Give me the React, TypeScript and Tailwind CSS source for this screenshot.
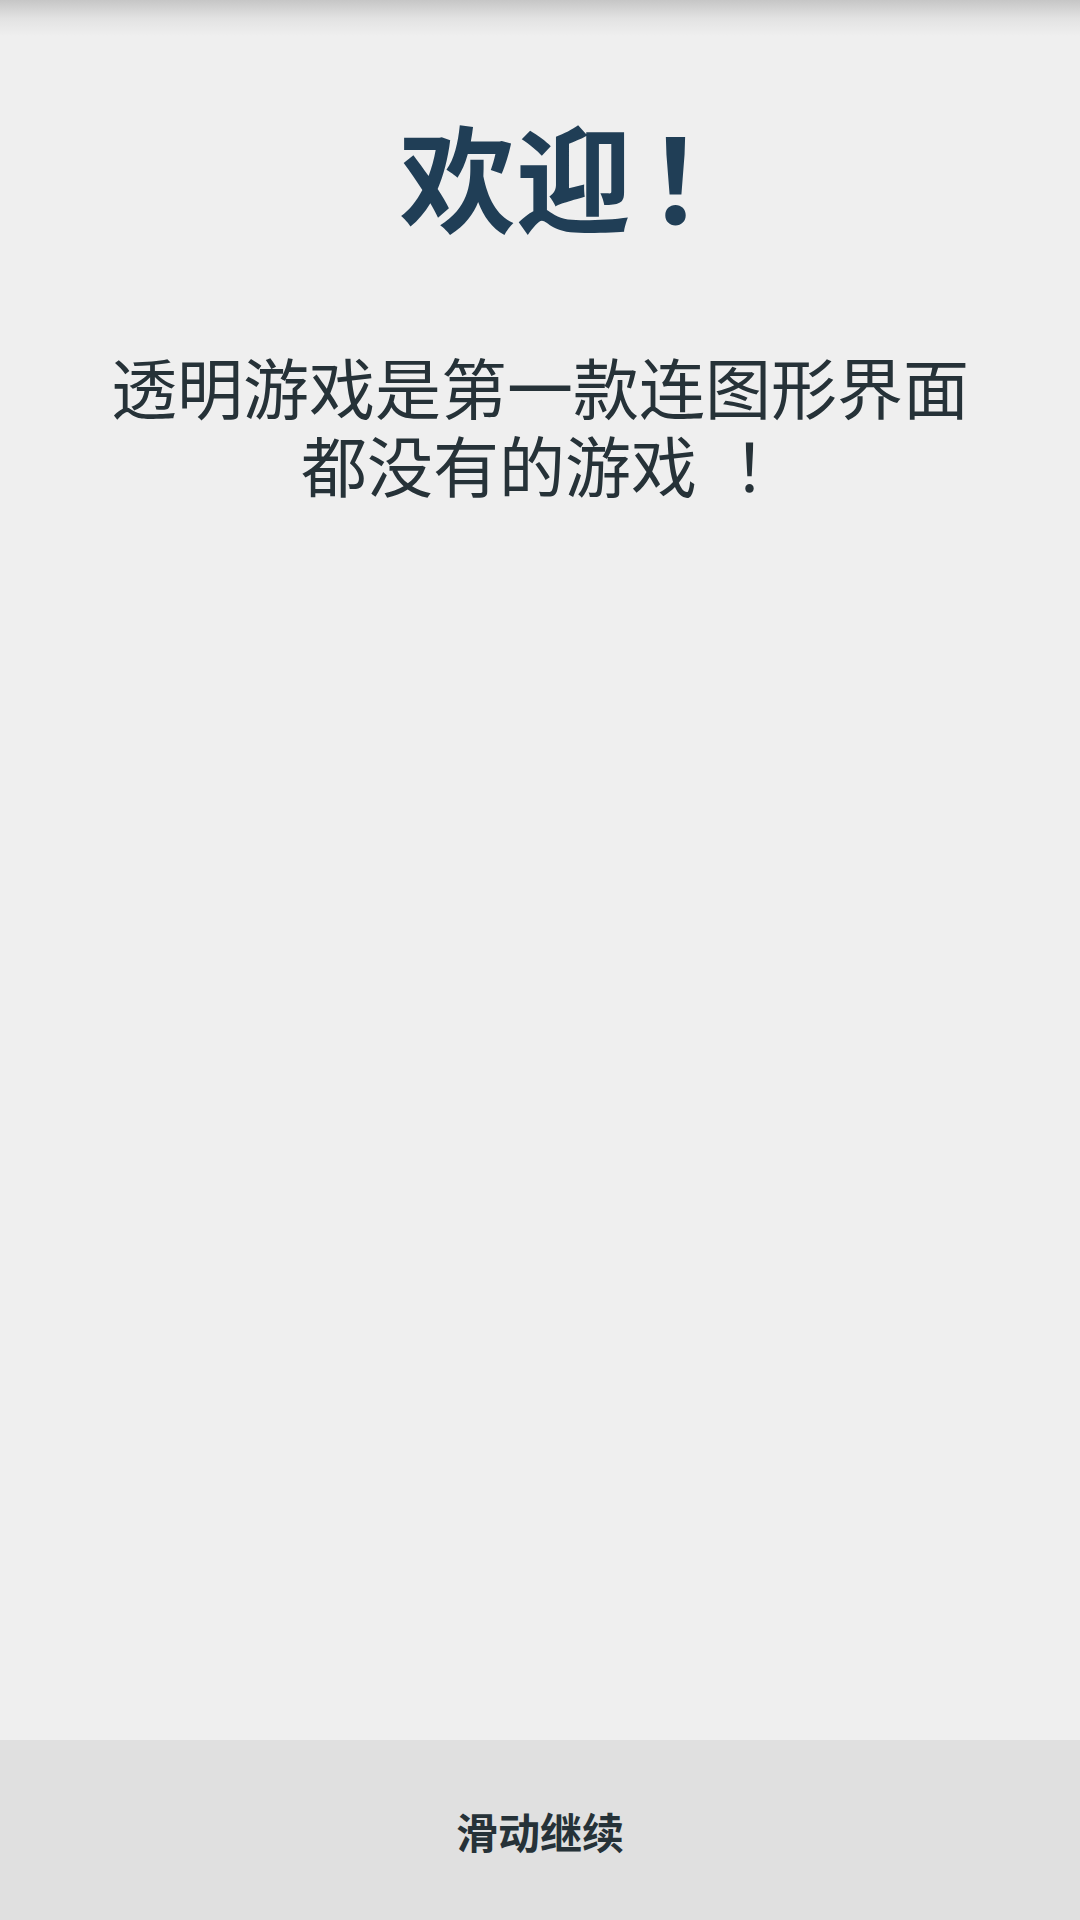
import React from 'react';

const cjk = { fontFamily: '"Noto Sans CJK SC", "Noto Sans", sans-serif' };

export default function App() {
  return (
    <div className="w-[1080px] h-[1920px] bg-[#efefef] flex flex-col overflow-hidden" style={cjk}>
      {/* shadow under the (hidden) action bar */}
      <div className="h-[36px] shrink-0 bg-gradient-to-b from-[#c6c6c6] via-[#e2e2e2] to-[#efefef]" />

      <main className="flex-1 flex flex-col items-center">
        <h1 className="mt-[79px] text-[116px] leading-none font-bold text-[#203e56] pl-[82px] whitespace-nowrap">
          欢迎<span className="ml-[15px]">！</span>
        </h1>
        <div className="mt-[115px] flex flex-col items-center text-[66px] leading-[78px] text-[#263238] whitespace-nowrap">
          <p>透明游戏是第一款连图形界面</p>
          <p className="pl-[20px]">
            都没有的游戏<span className="inline-block w-[36px]" />！
          </p>
        </div>
      </main>

      <footer className="h-[180px] shrink-0 bg-[#e0e0e0] flex items-center justify-center">
        <span className="text-[42px] font-bold text-[#263238]">滑动继续</span>
      </footer>
    </div>
  );
}
